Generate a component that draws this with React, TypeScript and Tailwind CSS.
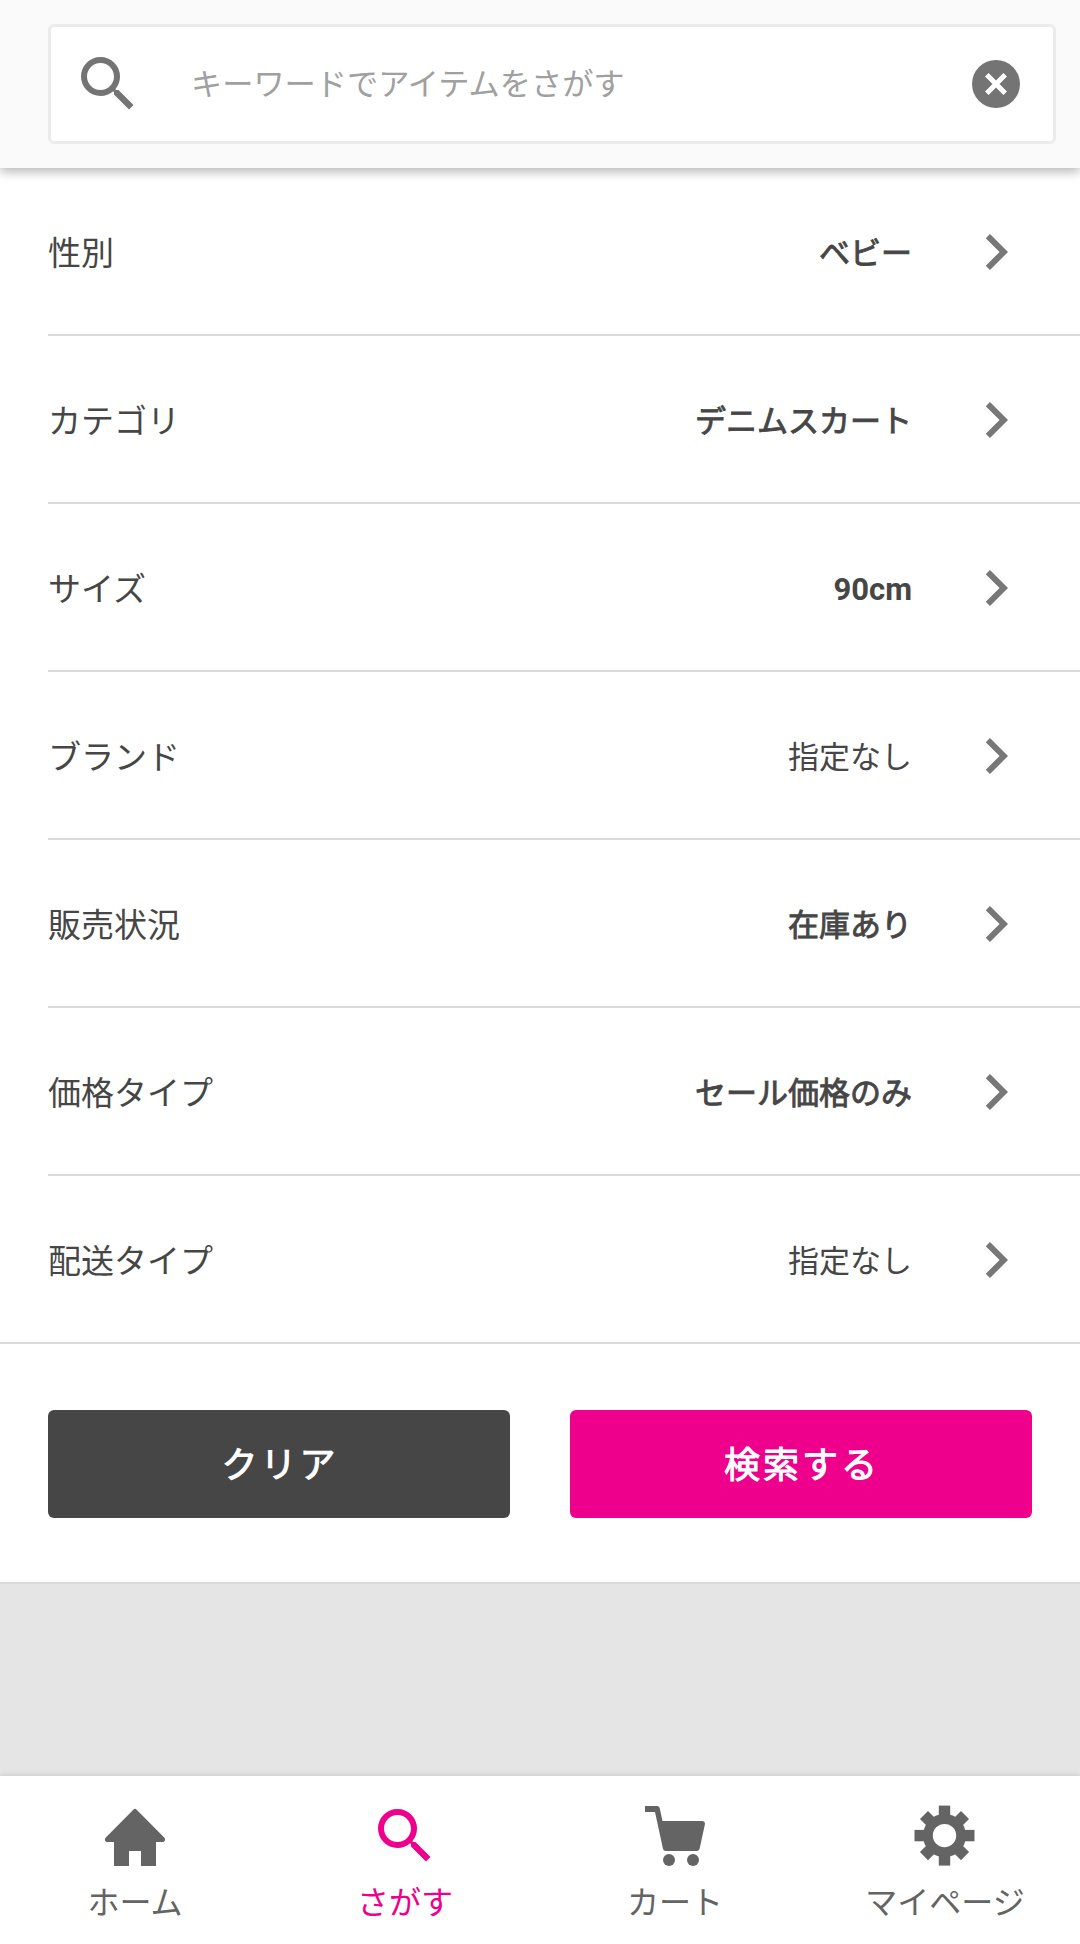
import { useState } from "react";
import type { ReactNode } from "react";
import { MdChevronRight, MdSearch } from "react-icons/md";

interface FilterRow {
  label: string;
  value: string;
  selected: boolean;
}

const FILTERS: FilterRow[] = [
  { label: "性別", value: "ベビー", selected: true },
  { label: "カテゴリ", value: "デニムスカート", selected: true },
  { label: "サイズ", value: "90cm", selected: true },
  { label: "ブランド", value: "指定なし", selected: false },
  { label: "販売状況", value: "在庫あり", selected: true },
  { label: "価格タイプ", value: "セール価格のみ", selected: true },
  { label: "配送タイプ", value: "指定なし", selected: false },
];

// Japanese text is thickened with a stroke, the full bold cut is too heavy.
// Latin values such as "90cm" use the real bold.
function valueWeight(row: FilterRow): string {
  if (!row.selected) return "pt-1 font-normal";
  return /^[\x20-\x7e]+$/.test(row.value) ? "pt-[5px] font-bold" : "pt-1 [-webkit-text-stroke:0.9px_#464646]";
}

function ClearIcon() {
  return (
    <svg width="48" height="48" viewBox="0 0 48 48">
      <circle cx="24" cy="24" r="24" fill="#747474" />
      <path d="M14.8 14.8l18.4 18.4M33.2 14.8L14.8 33.2" stroke="#fff" strokeWidth="5" />
    </svg>
  );
}

function HomeIcon() {
  return (
    <svg width="72" height="72" viewBox="0 0 72 72" fill="currentColor">
      <path d="M34.3 9.7a2.4 2.4 0 0 1 3.4 0L65.2 37.5c1.7 1.8.8 4.5-1.7 4.5H57v24H42V51H30v15H15V42H8.5c-2.5 0-3.4-2.7-1.7-4.500z" />
    </svg>
  );
}

function CartIcon() {
  return (
    <svg width="72" height="72" viewBox="0 0 72 72" fill="currentColor">
      <path d="M6 6h12c1.8 0 2.5 1 2.8 2.500L23.500 21H63c2.200 0 3.300 1.300 2.900 3.300L60.800 48c-.5 2-1.300 3-3.300 3H27c-2 0-2.800-1-3.200-3L16 12H6z" />
      <circle cx="30" cy="60" r="6" />
      <circle cx="54" cy="60" r="6" />
    </svg>
  );
}

function GearIcon() {
  return (
    <svg width="72" height="72" viewBox="0 0 72 72" fill="currentColor">
      <circle cx="35.5" cy="35.6" r="16.6" fill="none" stroke="currentColor" strokeWidth="9.8" />
      {[0, 45, 90, 135, 180, 225, 270, 315].map((deg) => (
        <rect
          key={deg}
          x="29.8"
          y={deg % 90 === 0 ? 5.6 : 6.6}
          width="11.4"
          height="12"
          transform={`rotate(${deg} 35.5 35.6)`}
        />
      ))}
    </svg>
  );
}

const TABS: { label: string; icon: ReactNode }[] = [
  { label: "ホーム", icon: <HomeIcon /> },
  { label: "さがす", icon: <MdSearch size={72} /> },
  { label: "カート", icon: <CartIcon /> },
  { label: "マイページ", icon: <GearIcon /> },
];

export default function App() {
  const [keyword, setKeyword] = useState("");
  const [activeTab, setActiveTab] = useState("さがす");

  return (
    <div className="flex h-[1944px] w-[1080px] flex-col overflow-hidden bg-[#e5e5e5] font-['Roboto','Noto_Sans_CJK_JP',sans-serif] text-[#464646]">
      <header className="z-10 h-[168px] shrink-0 bg-[#fafafa] py-6 pl-12 pr-6 shadow-[0_4px_10px_rgba(0,0,0,0.28)]">
        <div className="flex h-[120px] items-center rounded-md border-[3px] border-[#ebebeb] bg-white pl-[21px] pr-[33px]">
          <MdSearch size={72} className="shrink-0 text-[#747474]" />
          <input
            type="text"
            value={keyword}
            onChange={(e) => setKeyword(e.target.value)}
            placeholder="キーワードでアイテムをさがす"
            className="ml-[47px] min-w-0 flex-1 pt-[3px] text-[31.2px] outline-none placeholder:text-[#a0a0a0]"
          />
          <button type="button" onClick={() => setKeyword("")} className="shrink-0">
            <ClearIcon />
          </button>
        </div>
      </header>

      <main className="shrink-0 border-b-2 border-[#dadada] bg-white">
        <ul className="border-b-2 border-[#dadada] pl-12">
          {FILTERS.map((row) => (
            <li
              key={row.label}
              className="flex h-[168px] items-center border-b-2 border-[#dadada] pr-12 pt-0.5 last:h-[166px] last:border-b-0"
            >
              <span className="flex-1 pt-[3px] text-[33px]">{row.label}</span>
              <span className={`text-[31px] ${valueWeight(row)}`}>{row.value}</span>
              <MdChevronRight size={72} className="ml-12 text-[#777]" />
            </li>
          ))}
        </ul>

        <div className="flex h-[238px] gap-[60px] px-12 pt-[66px] text-[36px] tracking-[3px] text-white [-webkit-text-stroke:1px_#fff]">
          <button type="button" className="h-[108px] flex-1 rounded-md bg-[#464646] pl-0.5 pt-1">
            クリア
          </button>
          <button type="button" className="h-[108px] flex-1 rounded-md bg-[#ee008c] pl-0.5 pt-1">
            検索する
          </button>
        </div>
      </main>

      <nav className="mt-auto flex h-[168px] shrink-0 bg-white shadow-[0_-1px_6px_rgba(0,0,0,0.12)]">
        {TABS.map((tab) => (
          <button
            key={tab.label}
            type="button"
            onClick={() => setActiveTab(tab.label)}
            className={`flex flex-1 flex-col items-center pt-6 ${
              tab.label === activeTab ? "text-[#ee008c]" : "text-[#646464]"
            }`}
          >
            {tab.icon}
            <span className="mt-2 text-[32px] leading-[46px]">{tab.label}</span>
          </button>
        ))}
      </nav>
    </div>
  );
}
